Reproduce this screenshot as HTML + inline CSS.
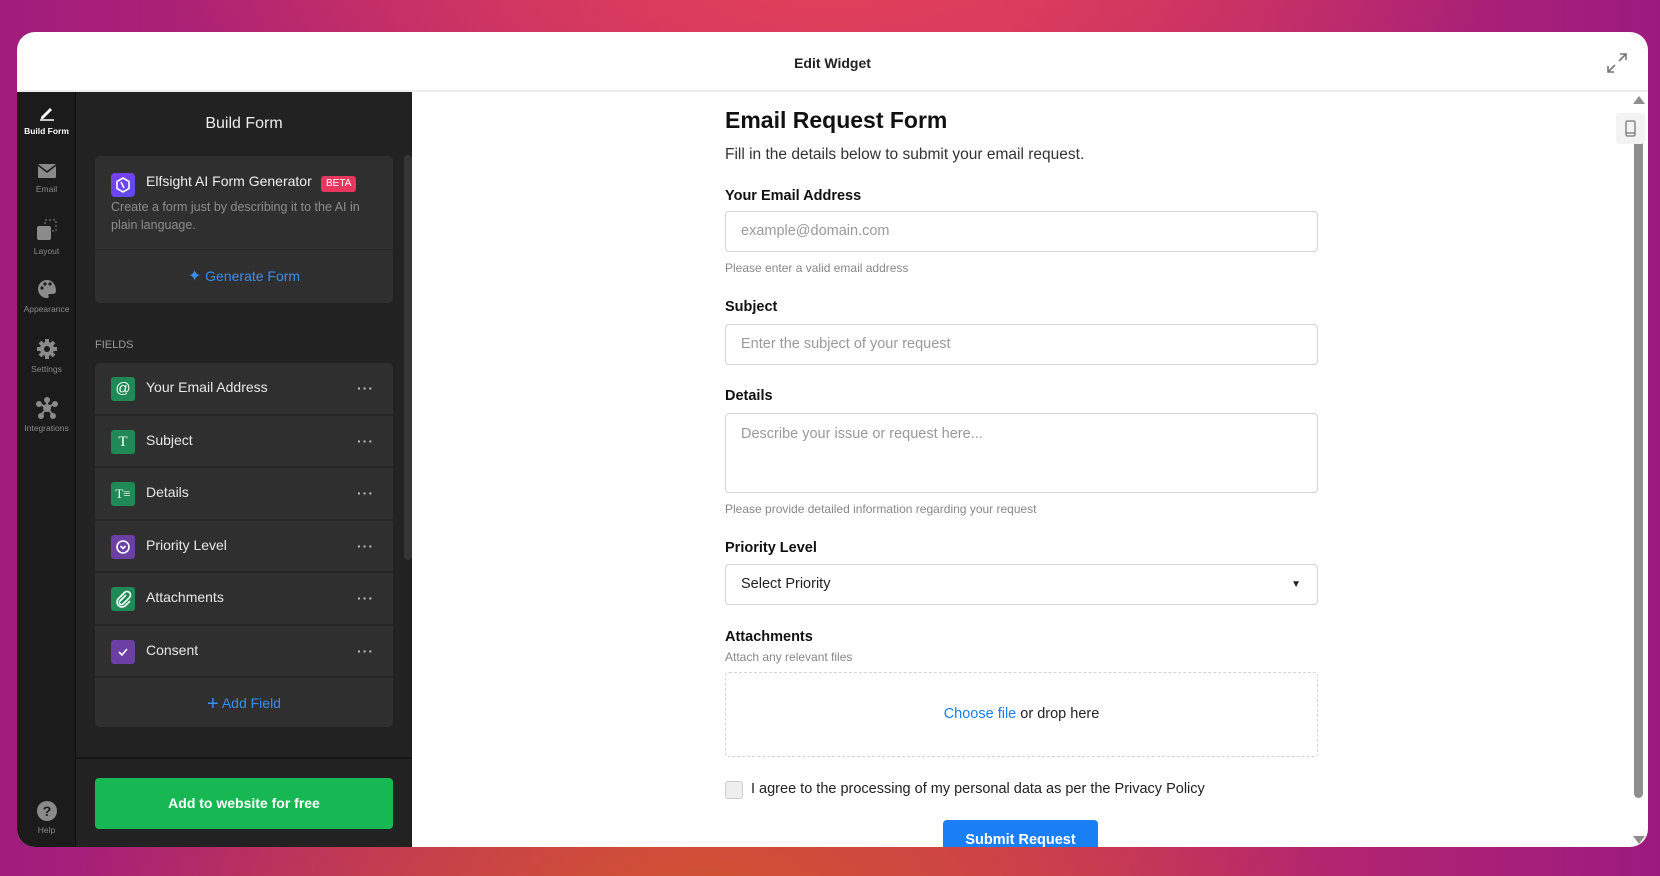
<!DOCTYPE html>
<html><head><meta charset="utf-8"><style>
*{box-sizing:border-box;margin:0;padding:0}
body{width:1660px;height:876px;overflow:hidden;font-family:"Segoe UI","Liberation Sans",sans-serif;position:relative;
background:
radial-gradient(ellipse 900px 500px at 700px 920px,#d2552e 0%,rgba(210,85,46,0) 70%),
radial-gradient(ellipse 900px 400px at 830px -60px,#e5435a 0%,rgba(229,67,90,0) 75%),
linear-gradient(90deg,#a11c7c 0%,#c9305f 45%,#c9305f 60%,#9c1a80 100%);}
.card{position:absolute;left:17px;top:32px;width:1631px;height:815px;background:#fff;border-radius:18px;overflow:hidden}
.hdr{height:60px;border-bottom:2px solid #eee;position:relative}
.hdr .t{position:absolute;left:0;right:0;top:23px;text-align:center;font-size:14px;font-weight:600;color:#222}
.rail{position:absolute;left:0;top:60px;width:59px;bottom:0;background:#1b1b1b;border-right:1px solid #111}
.ri{position:absolute;left:0;width:59px;text-align:center;font-size:8.5px;color:#8a8a8a}
.ri svg{display:block;margin:0 auto 4px}
.panel{position:absolute;left:59px;top:60px;width:336px;bottom:0;background:#222}
.panel h2{position:absolute;top:23px;left:0;width:336px;text-align:center;color:#eee;font-size:16px;font-weight:400}
.ai{position:absolute;left:19px;top:64px;width:298px;height:147px;background:#2f2f2f;border-radius:5px}
.ai .top{height:94px;border-bottom:1px solid #262626;padding:17px 16px}
.logo{position:absolute;left:16px;top:17px;width:24px;height:24px;border-radius:4px;background:linear-gradient(135deg,#7a3ff0,#5b4cf0)}
.ai .nm{position:absolute;left:51px;top:17px;color:#eee;font-size:14px}
.beta{position:absolute;left:226px;top:20px;background:#e8365e;color:#fff;font-size:10px;padding:1px 5px;border-radius:3px;line-height:14px}
.ai .ds{position:absolute;left:16px;top:43px;width:270px;color:#8d8d8d;font-size:12.5px;line-height:17.5px}
.gen{position:absolute;top:94px;left:0;width:298px;height:53px;text-align:center;line-height:53px;color:#3a8ef0;font-size:14px}
.fl{position:absolute;left:19px;top:247px;color:#999;font-size:11px}
.fields{position:absolute;left:19px;top:271px;width:298px;height:364px;background:#2f2f2f;border-radius:5px;overflow:hidden}
.row{height:52.5px;border-bottom:2px solid #262626;position:relative}
.row .ic{position:absolute;left:16px;top:14px;width:24px;height:24px;border-radius:3px;color:#fff;font-size:15px;text-align:center;line-height:24px}
.g{background:#1f8a55}.p{background:#6b3fa4}
.row .tx{position:absolute;left:51px;top:16px;color:#e8e8e8;font-size:14px}
.row .dt{position:absolute;left:262px;top:17px;color:#bbb;font-size:14px;letter-spacing:1px;font-weight:700}
.add{position:absolute;top:315px;width:298px;text-align:center;color:#3a8ef0;font-size:14px;line-height:50px}
.sep{position:absolute;left:0;top:665px;width:336px;height:2px;background:#151515}
.btn{position:absolute;left:19px;top:686px;width:298px;height:51px;background:#17b753;border-radius:4px;color:#fff;font-weight:700;font-size:14px;text-align:center;line-height:51px}
.psb{position:absolute;left:328px;top:63px;width:8px;height:405px;background:#353535;border-radius:4px}
.form{position:absolute;left:708px;top:60px;width:593px}
.form h1{position:absolute;top:15px;font-size:23px;font-weight:700;color:#111;white-space:nowrap}
.form .sub{position:absolute;top:54px;font-size:15.5px;color:#333;white-space:nowrap}
.lb{position:absolute;font-size:14.5px;font-weight:700;color:#111}
.in{position:absolute;left:0;width:593px;height:41px;border:1px solid #d4d4d4;border-radius:4px;padding:0 15px;line-height:39px;font-size:14.5px;color:#9a9a9a}
.hp{position:absolute;font-size:12px;color:#888;white-space:nowrap}
.vs{position:absolute;right:5px;top:86px;width:9px;height:680px;background:#8e8e8e;border-radius:5px}
</style></head><body>
<div class="card">
 <div class="hdr"><div class="t">Edit Widget</div>
  <svg style="position:absolute;right:20px;top:20px" width="22" height="22" viewBox="0 0 22 22" fill="none" stroke="#777" stroke-width="1.6"><path d="M13 9l7-7M14 2h6v6M9 13l-7 7M2 14v6h6"/></svg>
 </div>
 <div class="rail">
  <div class="ri" style="top:10px;color:#fff;font-weight:700"><svg width="20" height="20" viewBox="0 0 20 20"><path d="M4 15l9-9 2 2-9 9H4z" fill="#fff"/><path d="M3 18h14" stroke="#fff" stroke-width="1.5"/></svg>Build Form</div>
  <div class="ri" style="top:70px"><svg width="20" height="18" viewBox="0 0 20 18"><rect x="1" y="2" width="18" height="14" rx="1" fill="#8a8a8a"/><path d="M1 3l9 7 9-7" stroke="#1b1b1b" stroke-width="1.5" fill="none"/></svg>Email</div>
  <div class="ri" style="top:126px"><svg width="24" height="24" viewBox="0 0 24 24"><rect x="10" y="2" width="11" height="11" fill="none" stroke="#8a8a8a" stroke-dasharray="2 2"/><rect x="2" y="8" width="14" height="14" rx="2" fill="#8a8a8a"/></svg>Layout</div>
  <div class="ri" style="top:186px"><svg width="22" height="22" viewBox="0 0 22 22"><path d="M11 2a9 9 0 100 18c1.5 0 2-1 1.5-2s0-2 1.5-2H17a3 3 0 003-3C20 6 16 2 11 2z" fill="#8a8a8a"/><circle cx="6" cy="10" r="1.6" fill="#1b1b1b"/><circle cx="9" cy="6" r="1.6" fill="#1b1b1b"/><circle cx="14" cy="6" r="1.6" fill="#1b1b1b"/></svg>Appearance</div>
  <div class="ri" style="top:246px"><svg width="22" height="22" viewBox="0 0 22 22"><circle cx="11" cy="11" r="7" fill="#8a8a8a"/><g stroke="#8a8a8a" stroke-width="4"><path d="M11 1v4M11 17v4M1 11h4M17 11h4M4 4l3 3M15 15l3 3M4 18l3-3M15 7l3-3"/></g><circle cx="11" cy="11" r="3" fill="#1b1b1b"/></svg>Settings</div>
  <div class="ri" style="top:305px"><svg width="22" height="22" viewBox="0 0 22 22" fill="#8a8a8a" stroke="#8a8a8a" stroke-width="2"><path d="M11 11L11 3M11 11L4 7M11 11L18 7M11 11L5 18M11 11L17 18"/><circle cx="11" cy="11" r="3"/><circle cx="11" cy="3" r="2"/><circle cx="3" cy="7" r="2"/><circle cx="19" cy="7" r="2"/><circle cx="5" cy="19" r="2"/><circle cx="17" cy="19" r="2"/></svg>Integrations</div>
  <div class="ri" style="top:709px"><svg width="20" height="20" viewBox="0 0 20 20"><circle cx="10" cy="10" r="10" fill="#8a8a8a"/><text x="10" y="15" text-anchor="middle" font-size="14" font-weight="700" fill="#1b1b1b" font-family="Liberation Sans">?</text></svg>Help</div>
 </div>
 <div class="panel">
  <h2>Build Form</h2>
  <div class="ai">
   <div class="top"></div>
   <div class="logo"><svg width="24" height="24" viewBox="0 0 24 24" fill="none" stroke="#fff" stroke-width="1.6"><path d="M12 5l6 3.5v7L12 19l-6-3.5v-7z"/><path d="M10 9l3 6"/></svg></div>
   <div class="nm">Elfsight AI Form Generator</div><div class="beta">BETA</div>
   <div class="ds">Create a form just by describing it to the AI in plain language.</div>
   <div class="gen"><span style="font-size:16px">✦</span> Generate Form</div>
  </div>
  <div class="fl">FIELDS</div>
  <div class="fields">
   <div class="row"><div class="ic g">@</div><div class="tx">Your Email Address</div><div class="dt">···</div></div>
   <div class="row"><div class="ic g" style="font-family:Liberation Serif">T</div><div class="tx">Subject</div><div class="dt">···</div></div>
   <div class="row"><div class="ic g" style="font-family:Liberation Serif;font-size:13px">T≡</div><div class="tx">Details</div><div class="dt">···</div></div>
   <div class="row"><div class="ic p"><svg width="24" height="24" viewBox="0 0 24 24" fill="none" stroke="#fff" stroke-width="1.6"><circle cx="12" cy="12" r="6"/><path d="M9.5 11l2.5 2.5 2.5-2.5"/></svg></div><div class="tx">Priority Level</div><div class="dt">···</div></div>
   <div class="row"><div class="ic g"><svg width="24" height="24" viewBox="0 0 24 24" fill="none" stroke="#fff" stroke-width="1.6"><path d="M15 8l-6 6a2 2 0 003 3l6.5-6.5a3.5 3.5 0 00-5-5L7 12a5 5 0 007 7l5-5"/></svg></div><div class="tx">Attachments</div><div class="dt">···</div></div>
   <div class="row"><div class="ic p"><svg width="24" height="24" viewBox="0 0 24 24" fill="none" stroke="#fff" stroke-width="1.6"><path d="M8 12l3 3 5-6"/></svg></div><div class="tx">Consent</div><div class="dt">···</div></div>
   <div class="add"><span style="font-size:20px;vertical-align:-2px">+</span> Add Field</div>
  </div>
  <div class="psb"></div>
  <div class="sep"></div>
  <div class="btn">Add to website for free</div>
 </div>
 <div class="form">
  <h1>Email Request Form</h1>
  <div class="sub">Fill in the details below to submit your email request.</div>
  <div class="lb" style="top:96px">Your Email Address</div>
  <div class="in" style="top:119px">example@domain.com</div>
  <div class="hp" style="top:169px">Please enter a valid email address</div>
  <div class="lb" style="top:207px">Subject</div>
  <div class="in" style="top:232px">Enter the subject of your request</div>
  <div class="lb" style="top:296px">Details</div>
  <div class="in" style="top:321px;height:80px;line-height:40px">Describe your issue or request here...</div>
  <div class="hp" style="top:410px">Please provide detailed information regarding your request</div>
  <div class="lb" style="top:448px">Priority Level</div>
  <div class="in" style="top:472px;color:#222">Select Priority<span style="position:absolute;right:16px;top:0;font-size:10px">▼</span></div>
  <div class="lb" style="top:537px">Attachments</div>
  <div class="hp" style="top:558px">Attach any relevant files</div>
  <div class="in" style="top:580px;height:85px;border:1px dashed #d4d4d4;text-align:center;line-height:83px"><span style="color:#1a7ef5">Choose file</span><span style="color:#222"> or drop here</span></div>
  <div style="position:absolute;top:689px;left:0;width:18px;height:18px;border:1px solid #ccc;background:#eee;border-radius:3px"></div>
  <div style="position:absolute;top:689px;left:26px;font-size:14.5px;color:#222;white-space:nowrap">I agree to the processing of my personal data as per the Privacy Policy</div>
  <div style="position:absolute;top:728px;left:218px;width:155px;height:40px;background:#1a7ef5;border-radius:4px;color:#fff;font-weight:700;font-size:14.5px;text-align:center;line-height:40px">Submit Request</div>
 </div>
 <div class="vs"></div>
 <div style="position:absolute;right:3px;top:64px;width:0;height:0;border-left:6px solid transparent;border-right:6px solid transparent;border-bottom:8px solid #8e8e8e"></div>
 <div style="position:absolute;right:3px;bottom:3px;width:0;height:0;border-left:6px solid transparent;border-right:6px solid transparent;border-top:8px solid #8e8e8e"></div>
 <div style="position:absolute;right:3px;top:81px;width:29px;height:31px;background:#f3f3f3;border-radius:4px"><svg style="position:absolute;left:9px;top:7px" width="11" height="17" viewBox="0 0 11 17" fill="none" stroke="#777" stroke-width="1.3"><rect x="1" y="1" width="9" height="15" rx="1.5"/><path d="M1 13h9"/></svg></div>
</div>
</body></html>
